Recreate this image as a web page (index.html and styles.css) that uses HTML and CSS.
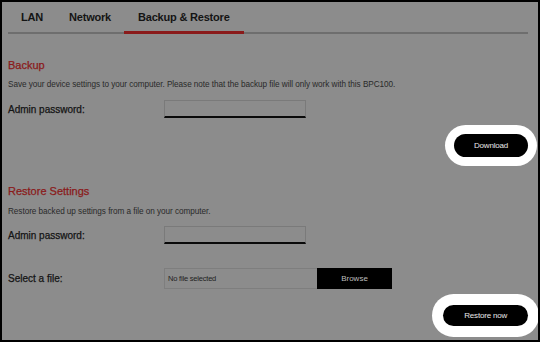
FILE: index.html
```html
<!DOCTYPE html>
<html lang="en">
<head>
  <meta charset="UTF-8">
  <title>Backup &amp; Restore</title>
  <link rel="stylesheet" href="styles.css">
</head>
<body>
  <div class="frame">
    <nav class="tabs">
      <span class="tab">LAN</span>
      <span class="tab">Network</span>
      <span class="tab active">Backup &amp; Restore</span>
    </nav>

    <section class="backup">
      <h3>Backup</h3>
      <p class="desc">Save your device settings to your computer. Please note that the backup file will only work with this BPC100.</p>
      <div class="row">
        <label>Admin password:</label>
        <input type="password" class="field">
      </div>
      <div class="actions">
        <button class="pill">Download</button>
      </div>
    </section>

    <section class="restore">
      <h3>Restore Settings</h3>
      <p class="desc">Restore backed up settings from a file on your computer.</p>
      <div class="row">
        <label>Admin password:</label>
        <input type="password" class="field">
      </div>
      <div class="row file-row">
        <label>Select a file:</label>
        <div class="file">
          <span class="file-name">No file selected</span>
          <span class="browse">Browse</span>
        </div>
      </div>
      <div class="actions">
        <button class="pill restore-btn">Restore now</button>
      </div>
    </section>
  </div>
</body>
</html>
```

FILE: styles.css
```css
html, body {
  margin: 0;
  padding: 0;
}

body {
  font-family: "Liberation Sans", Arial, sans-serif;
  background: #8c8c8c;
}

.frame {
  width: 540px;
  height: 342px;
  box-sizing: border-box;
  border: 2px solid #000;
  padding: 0 10px 0 6px;
  background: #8c8c8c;
  overflow: hidden;
}

.tabs {
  display: flex;
  border-bottom: 2px solid #6e6e6e;
  height: 30px;
  align-items: stretch;
}

.tab {
  padding: 0 13px;
  font-size: 11px;
  font-weight: bold;
  color: #141414;
  line-height: 30px;
  letter-spacing: -0.2px;
}

.tab.active {
  padding: 0 14px;
  border-bottom: 3px solid #8a1a1a;
  margin-bottom: -2px;
}

h3 {
  margin: 0;
  font-size: 11px;
  line-height: 14px;
  font-weight: normal;
  color: #8a1a1a;
  -webkit-text-stroke: 0.25px #8a1a1a;
}

.backup h3 { margin-top: 24px; }
.restore h3 { margin-top: 27px; }

.desc {
  margin: 8px 0 0;
  font-size: 8.2px;
  line-height: 10px;
  color: #2a2a2a;
  letter-spacing: -0.05px;
}

.restore .desc { margin-top: 9px; }

.row {
  display: flex;
  align-items: center;
  margin-top: 10px;
}

.restore .row { margin-top: 9px; }
.restore .file-row { margin-top: 24px; }

label {
  width: 156px;
  font-size: 10px;
  color: #141414;
  -webkit-text-stroke: 0.25px #141414;
}

.field {
  width: 142px;
  height: 18px;
  box-sizing: border-box;
  margin: 0;
  background: #8c8c8c;
  border: 1px solid #7a7a7a;
  border-bottom: 2px solid #0a0a0a;
  padding: 0 4px;
}

.file {
  display: flex;
  height: 21px;
}

.file-name {
  width: 153px;
  box-sizing: border-box;
  border: 1px solid #7e7e7e;
  border-right: none;
  padding-left: 3px;
  font-size: 7.5px;
  line-height: 19px;
  color: #222;
  letter-spacing: -0.2px;
}

.browse {
  width: 75px;
  background: #000;
  color: #bdbdbd;
  font-size: 8px;
  line-height: 21px;
  text-align: center;
}

.actions {
  display: flex;
  justify-content: flex-end;
  margin-top: 16px;
}

.pill {
  height: 23px;
  padding: 0 20px;
  border: none;
  border-radius: 12px;
  background: #000;
  color: #e8e8e8;
  font-family: "Liberation Sans", Arial, sans-serif;
  font-size: 8px;
  letter-spacing: -0.2px;
  box-shadow: 0 0 0 9px #fff;
  cursor: pointer;
}

.restore-btn {
  height: 21px;
  padding: 0 21px;
  box-shadow: 0 0 0 11px #fff;
}
```
